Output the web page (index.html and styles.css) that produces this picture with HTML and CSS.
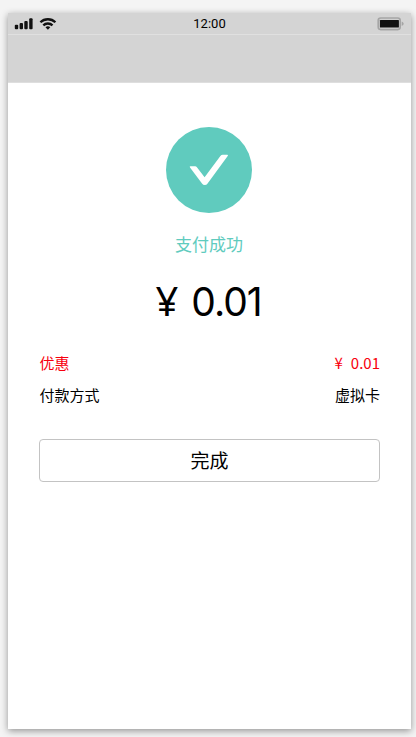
FILE: index.html
```html
<!DOCTYPE html>
<html lang="zh-CN">
<head>
<meta charset="utf-8">
<title>支付成功</title>
<link rel="stylesheet" href="styles.css">
</head>
<body>
<main class="phone">
  <header class="status">
    <svg class="signals" width="44" height="14" viewBox="0 0 44 14">
      <g fill="#111">
        <rect x="0.8" y="7.8" width="3.4" height="4.4" rx="1"/>
        <rect x="5.6" y="6" width="3.4" height="6.2" rx="1"/>
        <rect x="10.3" y="4" width="3.4" height="8.2" rx="1"/>
        <rect x="15.2" y="1.3" width="3.4" height="10.9" rx="1"/>
      </g>
      <g fill="none" stroke="#111" stroke-width="2.3">
        <path d="M26.4 5.3a10.7 10.7 0 0 1 15 0"/>
        <path d="M29.3 8.4a6.5 6.5 0 0 1 9.2 0"/>
      </g>
      <path fill="#111" d="M31.5 10.3a3.5 3.5 0 0 1 4.8 0L33.9 12.8z"/>
    </svg>
    <span class="time">12:00</span>
    <svg class="battery" width="28" height="14" viewBox="0 0 28 14">
      <rect x="1.2" y="1" width="22" height="11.6" rx="2.5" fill="#d0d0d0" stroke="#a5a5a5" stroke-width="1.6"/>
      <rect x="2.9" y="3" width="19" height="7.6" rx=".6" fill="#111"/>
      <path d="M24.7 4.6q2 .8 2 2.2t-2 2.2z" fill="#a5a5a5"/>
    </svg>
  </header>
  <div class="navbar"></div>
  <section class="content">
    <svg class="done" width="86" height="86" viewBox="0 0 86 86">
      <circle cx="43" cy="43" r="43" fill="#60cbbe"/>
      <path fill="#fff" d="M24.4 39.2h4.7q1.1 0 1.8 1l7.7 10.1L54.4 29q.9-1.2 2.3-1.2h4.4q1.5 0 .6 1.2L41.6 56.6q-1.1 1.5-2.8 1.5t-2.8-1.5L24 40.4q-.7-1.2.4-1.2z"/>
    </svg>
    <h1 class="title">支付成功</h1>
    <p class="amount"><span class="yen">¥</span>0.01</p>
    <div class="row discount"><span>优惠</span><span><span class="yen">¥</span>0.01</span></div>
    <div class="row"><span>付款方式</span><span>虚拟卡</span></div>
    <button class="finish">完成</button>
  </section>
</main>
</body>
</html>
```

FILE: styles.css
```css
* { box-sizing: border-box; }
body {
  margin: 0;
  height: 737px;
  padding: 13px 5px 0 8px;
  overflow: hidden;
  background: #f4f4f4;
  color: #000;
  font-family: "Noto Sans CJK SC", sans-serif;
}
.phone {
  height: 716px;
  background: #fff;
  box-shadow: 0 2px 7px rgba(0, 0, 0, .4);
}
.status {
  display: grid;
  grid-template-columns: 1fr auto 1fr;
  align-items: center;
  height: 22px;
  padding: 0 6px;
  background: #d4d4d4;
  border-bottom: 1px solid #e0e0e0;
}
.battery { justify-self: end; }
.time {
  font: 13px/21px Roboto, sans-serif;
}
.navbar {
  height: 48px;
  background: #d4d4d4;
  border-bottom: 1px solid #dedede;
}
.content {
  display: flex;
  flex-direction: column;
  padding: 44px 31px 0;
}
.done {
  align-self: center;
  margin-right: 1px;
}
.title {
  margin: 18px 1px 0 0;
  text-align: center;
  font-size: 17px;
  line-height: 26px;
  font-weight: 400;
  color: #60cbbe;
}
.amount {
  display: flex;
  justify-content: center;
  align-items: baseline;
  height: 50px;
  margin: 19px 2px 1px 0;
  font: 39px/50px Inter, sans-serif;
  letter-spacing: -1px;
}
.amount .yen {
  margin-right: 14px;
  font: 40px/50px "Noto Sans", sans-serif;
}
.row {
  display: flex;
  justify-content: space-between;
  height: 32px;
  padding-left: .5px;
  font-size: 15px;
  line-height: 32px;
}
.discount {
  margin-top: 20px;
  color: #f8000e;
}
.discount .yen { margin-right: 8px; }
.finish {
  height: 43px;
  margin-top: 28px;
  padding: 0 0 2px;
  border: 1px solid #c3c3c3;
  border-radius: 4px;
  background: #fff;
  color: #000;
  font: 19px/38px "Noto Sans CJK SC", sans-serif;
}
```
